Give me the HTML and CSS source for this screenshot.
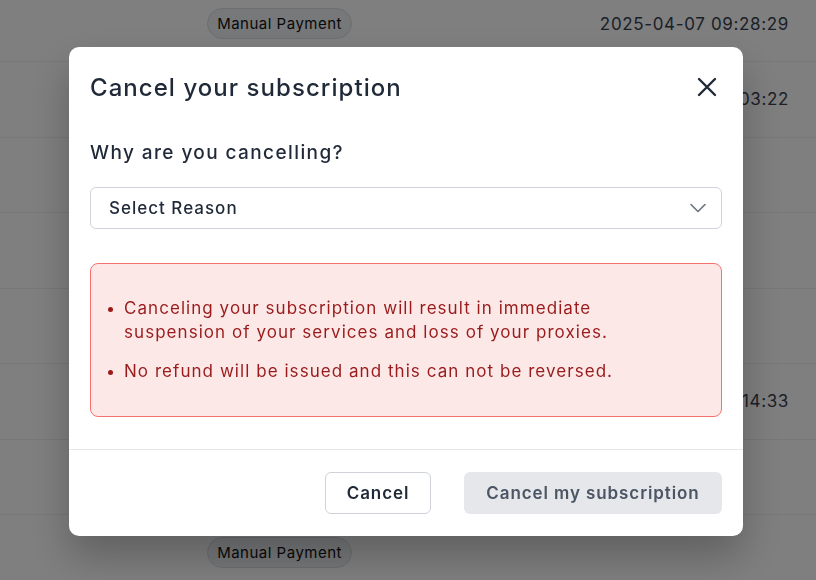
FILE: index.html
```html
<!DOCTYPE html>
<html lang="en">
<head>
<meta charset="utf-8">
<title>Cancel subscription</title>
<link rel="stylesheet" href="styles.css">
</head>
<body>
<div class="table">
  <div class="row"><div class="cell-type"><span class="badge">Manual Payment</span></div><div class="cell-date">2025-04-07 09:28:29</div></div>
  <div class="row"><div class="cell-type"></div><div class="cell-date">2025-04-07 09:03:22</div></div>
  <div class="row"><div class="cell-type"></div><div class="cell-date"></div></div>
  <div class="row"><div class="cell-type"></div><div class="cell-date"></div></div>
  <div class="row"><div class="cell-type"></div><div class="cell-date"></div></div>
  <div class="row"><div class="cell-type"></div><div class="cell-date">2025-04-07 08:14:33</div></div>
  <div class="row"><div class="cell-type"></div><div class="cell-date"></div></div>
  <div class="row"><div class="cell-type"><span class="badge">Manual Payment</span></div><div class="cell-date"></div></div>
</div>

<div class="overlay">
  <div class="modal" role="dialog" aria-labelledby="modal-title">
    <div class="modal-body">
      <div class="modal-head">
        <h2 id="modal-title" class="modal-title">Cancel your subscription</h2>
        <button class="close-btn" aria-label="Close">
          <svg width="20" height="20" viewBox="0 0 20 20" fill="none" stroke="#1f2937" stroke-width="2.4" stroke-linecap="round"><path d="M2 2L18 18M18 2L2 18"/></svg>
        </button>
      </div>
      <p class="question">Why are you cancelling?</p>
      <div class="select">
        <span>Select Reason</span>
        <svg width="16" height="10" viewBox="0 0 16 10" fill="none" stroke="#6b7280" stroke-width="1.6" stroke-linecap="round" stroke-linejoin="round"><path d="M1 1.5L8 8.5L15 1.5"/></svg>
      </div>
      <div class="alert">
        <ul>
          <li>Canceling your subscription will result in immediate suspension of your services and loss of your proxies.</li>
          <li>No refund will be issued and this can not be reversed.</li>
        </ul>
      </div>
    </div>
    <div class="modal-foot">
      <button class="btn btn-outline">Cancel</button>
      <button class="btn btn-disabled">Cancel my subscription</button>
    </div>
  </div>
</div>
</body>
</html>
```

FILE: styles.css
```css
* { box-sizing: border-box; }
html, body { margin: 0; padding: 0; }
body {
  width: 816px;
  height: 580px;
  overflow: hidden;
  background: #ffffff;
  font-family: Inter, "Noto Sans", sans-serif;
  color: #111827;
}
.table {
  margin-top: -13.5px;
}
.row {
  height: 75.5px;
  border-bottom: 1px solid #eef0f3;
  display: flex;
  align-items: center;
  padding-right: 27px;
}
.cell-type {
  width: 560px;
  display: flex;
  justify-content: flex-end;
  padding-right: 208px;
}
.cell-date {
  flex: 1;
  text-align: right;
  font-size: 17px;
  color: #374151;
  letter-spacing: 0.65px;
}
.badge {
  display: inline-block;
  height: 31px;
  line-height: 29px;
  padding: 0 9px;
  border: 1px solid #d9dce1;
  border-radius: 16px;
  background: #eef0f3;
  font-size: 15px;
  color: #111111;
  letter-spacing: 0.5px;
}
.overlay {
  position: fixed;
  inset: 0;
  background: rgba(0, 0, 0, 0.5);
  display: flex;
  align-items: flex-start;
  justify-content: flex-start;
  padding: 47px 0 0 69px;
}
.modal {
  width: 674px;
  height: 489px;
  background: #ffffff;
  border-radius: 10px;
  box-shadow: 0 20px 40px rgba(0, 0, 0, 0.25);
  display: flex;
  flex-direction: column;
}
.modal-body {
  padding: 24px 21px 0 21px;
  height: 403px;
  border-bottom: 1px solid #e5e7eb;
}
.modal-head {
  display: flex;
  align-items: center;
  justify-content: space-between;
  height: 32px;
}
.modal-title {
  margin: 0;
  font-size: 24px;
  font-weight: 500;
  color: #1f2937;
  letter-spacing: 1.05px;
}
.close-btn {
  border: 0;
  background: none;
  padding: 0;
  margin-right: 5px;
  width: 20px;
  height: 20px;
  display: flex;
}
.question {
  margin: 38px 0 0 0;
  font-size: 19px;
  font-weight: 500;
  color: #1f2937;
  line-height: 24px;
  letter-spacing: 1.4px;
}
.select {
  margin-top: 22px;
  height: 42px;
  border: 1px solid #cfd3d9;
  border-radius: 6px;
  display: flex;
  align-items: center;
  justify-content: space-between;
  padding: 0 15px 0 18px;
  font-size: 17px;
  font-weight: 500;
  color: #1f2937;
  letter-spacing: 1px;
}
.alert {
  margin-top: 34px;
  height: 154px;
  border: 1px solid #f87171;
  border-radius: 8px;
  background: #fde8e8;
  padding: 32px 20px 0 15px;
}
.alert ul {
  margin: 0;
  padding-left: 18px;
  color: #991b1b;
  font-size: 17px;
  line-height: 24px;
  letter-spacing: 1.05px;
}
.alert li {
  margin-bottom: 15px;
  padding-left: 0;
  max-width: 560px;
}
.alert li::marker {
  font-size: 14px;
}
.modal-foot {
  flex: 1;
  display: flex;
  align-items: center;
  justify-content: flex-end;
  gap: 33px;
  padding: 0 21px 0 0;
}
.btn {
  height: 42px;
  border-radius: 6px;
  font-family: inherit;
  font-size: 17px;
  font-weight: 600;
  letter-spacing: 0.9px;
}
.btn-outline {
  width: 106px;
  background: #ffffff;
  border: 1px solid #cfd3d9;
  color: #1f2937;
}
.btn-disabled {
  width: 258px;
  background: #e5e7eb;
  border: 0;
  color: #4b5563;
}
```
